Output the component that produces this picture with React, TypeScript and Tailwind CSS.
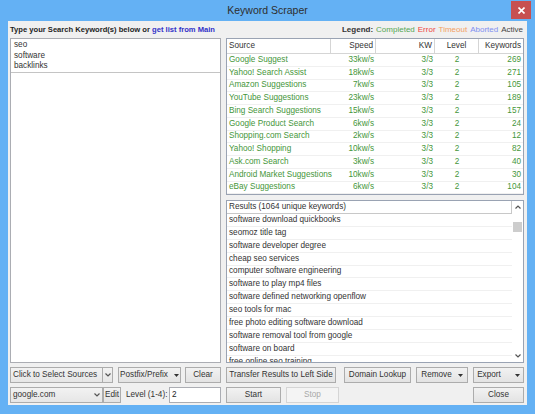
import React from "react";

const sources: [string, string, string][] = [
  ["Google Suggest", "33kw/s", "269"],
  ["Yahoo! Search Assist", "18kw/s", "271"],
  ["Amazon Suggestions", "7kw/s", "105"],
  ["YouTube Suggestions", "23kw/s", "189"],
  ["Bing Search Suggestions", "15kw/s", "157"],
  ["Google Product Search", "6kw/s", "24"],
  ["Shopping.com Search", "2kw/s", "12"],
  ["Yahoo! Shopping", "10kw/s", "82"],
  ["Ask.com Search", "3kw/s", "40"],
  ["Android Market Suggestions", "10kw/s", "30"],
  ["eBay Suggestions", "6kw/s", "104"],
];

const results = [
  "software download quickbooks",
  "seomoz title tag",
  "software developer degree",
  "cheap seo services",
  "computer software engineering",
  "software to play mp4 files",
  "software defined networking openflow",
  "seo tools for mac",
  "free photo editing software download",
  "software removal tool from google",
  "software on board",
  "free online seo training",
];

function Caret() {
  return (
    <svg width="5" height="3" viewBox="0 0 5 3" className="ml-[6px]">
      <path d="M0 0h5L2.5 3z" fill="#333" />
    </svg>
  );
}

function Chevron({ up }: { up?: boolean }) {
  return (
    <svg width="6" height="4" viewBox="0 0 6 4">
      <path d={up ? "M0.5 3.5L3 1l2.5 2.5" : "M0.5 0.5L3 3l2.5-2.5"} fill="none" stroke="#555" strokeWidth="1.2" />
    </svg>
  );
}

const btn =
  "h-[16px] flex items-center justify-center border border-[#acacac] bg-linear-to-b from-[#f2f2f2] to-[#e3e3e3] text-[#333]";

export default function App() {
  return (
    <div className="w-[535px] h-[414px] bg-[#64b1f4] flex flex-col px-[8px] pb-[9px] font-['Liberation_Sans',Arial,sans-serif] text-[8.2px] leading-none overflow-hidden">
      <div className="h-[21px] shrink-0 relative flex items-center justify-center">
        <span className="text-[10.5px] text-[#2e2e2e]">Keyword Scraper</span>
        <div className="absolute right-[-4px] top-[1px] w-[20px] h-[18px] bg-[#c75050] flex items-center justify-center">
          <svg width="7" height="7" viewBox="0 0 7 7">
            <path d="M0.5 0.5l6 6M6.5 0.5l-6 6" stroke="#fff" strokeWidth="1.6" />
          </svg>
        </div>
      </div>

      <div className="flex-1 bg-[#f0f0f0] pl-[2px] pr-[3px] pb-[2px] flex flex-col">
        <div className="h-[17px] flex items-center justify-between pt-[1px]">
          <div className="font-bold text-[#1e1e1e] text-[7.6px]">
            Type your Search Keyword(s) below or <span className="text-[#3232c8]">get list from Main</span>
          </div>
          <div className="text-[8px] flex gap-[3px] pr-[1px]">
            <span className="font-bold text-[#333]">Legend:</span>
            <span className="text-[#55a655]">Completed</span>
            <span className="text-[#ee4545]">Error</span>
            <span className="text-[#f3a062]">Timeout</span>
            <span className="text-[#7f8ff0]">Aborted</span>
            <span className="text-[#444]">Active</span>
          </div>
        </div>

        <div className="grid grid-cols-[211px_298px] grid-rows-[325px_16px_16px] gap-x-[5px] gap-y-[4px]">
          {/* keywords input */}
          <div className="bg-white border border-[#abadb3]">
            <div className="border-b border-[#c4c4c4] pt-[1px] pl-[3px] text-[#333] leading-[10.7px]">
              <div>seo</div>
              <div>software</div>
              <div>backlinks</div>
            </div>
          </div>

          <div className="flex flex-col gap-[5px]">
            {/* sources table */}
            <div className="h-[157px] bg-white border border-[#9aa3b3] overflow-hidden">
              <div className="grid grid-cols-[104px_45px_59px_44px_1fr] h-[15px] border-b border-[#d5d5d5] text-[#333]">
                <div className="pl-[2px] flex items-center border-r border-[#d5d5d5]">Source</div>
                <div className="pr-[2px] flex items-center justify-end border-r border-[#d5d5d5]">Speed</div>
                <div className="pr-[2px] flex items-center justify-end border-r border-[#d5d5d5]">KW</div>
                <div className="flex items-center justify-center border-r border-[#d5d5d5]">Level</div>
                <div className="pr-[2px] flex items-center justify-end">Keywords</div>
              </div>
              {sources.map(([name, speed, kw]) => (
                <div
                  key={name}
                  className="grid grid-cols-[104px_45px_59px_44px_1fr] h-[12.75px] border-b border-[#f0f0f0] text-[#45963a]"
                >
                  <div className="pl-[2px] flex items-center whitespace-nowrap">{name}</div>
                  <div className="pr-[2px] flex items-center justify-end">{speed}</div>
                  <div className="pr-[2px] flex items-center justify-end">3/3</div>
                  <div className="flex items-center justify-center">2</div>
                  <div className="pr-[2px] flex items-center justify-end">{kw}</div>
                </div>
              ))}
            </div>

            {/* results */}
            <div className="h-[163px] bg-white border border-[#9aa3b3] flex overflow-hidden">
              <div className="flex-1 flex flex-col overflow-hidden">
                <div className="h-[13px] shrink-0 border-b border-r border-[#c8c8c8] pl-[2px] flex items-center text-[#333]">
                  Results (1064 unique keywords)
                </div>
                {results.map((r) => (
                  <div
                    key={r}
                    className="h-[12.9px] shrink-0 border-b border-[#f0f0f0] pl-[2px] flex items-center text-[#333] whitespace-nowrap"
                  >
                    {r}
                  </div>
                ))}
              </div>
              <div className="w-[11px] flex flex-col items-center">
                <div className="h-[12px] flex items-center">
                  <Chevron up />
                </div>
                <div className="mt-[9px] w-[9px] h-[10px] bg-[#cdcdcd]" />
                <div className="flex-1" />
                <div className="h-[12px] flex items-center">
                  <Chevron />
                </div>
              </div>
            </div>
          </div>

          {/* bottom row 1 left */}
          <div className="flex items-center">
            <div className="w-[103px] h-[16px] flex border border-[#acacac] bg-linear-to-b from-[#f2f2f2] to-[#e6e6e6] text-[#333]">
              <div className="flex-1 pl-[2px] flex items-center whitespace-nowrap">Click to Select Sources</div>
              <div className="w-[10px] border-l border-[#acacac] flex items-center justify-center">
                <Chevron />
              </div>
            </div>
            <div className={`${btn} w-[63px] ml-[5px]`}>
              Postfix/Prefix
              <Caret />
            </div>
            <div className={`${btn} w-[36px] ml-[4px]`}>Clear</div>
          </div>

          {/* bottom row 1 right */}
          <div className="flex items-center">
            <div className={`${btn} w-[110px] whitespace-nowrap`}>Transfer Results to Left Side</div>
            <div className={`${btn} w-[67px] ml-[8px]`}>Domain Lookup</div>
            <div className={`${btn} w-[52px] ml-[5px]`}>
              Remove
              <Caret />
            </div>
            <div className={`${btn} w-[51px] ml-[5px]`}>
              Export
              <span className="ml-[8px]"><Caret /></span>
            </div>
          </div>

          {/* bottom row 2 left */}
          <div className="flex items-center">
            <div className="w-[93px] h-[16px] flex items-center justify-between border border-[#acacac] bg-linear-to-b from-[#f2f2f2] to-[#e6e6e6] text-[#333] pl-[2px] pr-[2px]">
              <span>google.com</span>
              <Chevron />
            </div>
            <div className={`${btn} w-[18px]`}>Edit</div>
            <span className="ml-[5px] text-[#333]">Level (1-4):</span>
            <div className="ml-auto w-[52px] h-[16px] bg-white border border-[#abadb3] flex items-center pl-[2px] text-[#222]">
              2
            </div>
          </div>

          {/* bottom row 2 right */}
          <div className="flex items-center">
            <div className={`${btn} w-[55px]`}>Start</div>
            <div className="h-[16px] w-[53px] ml-[5px] flex items-center justify-center border border-[#d5d5d5] bg-[#f4f4f4] text-[#a8a8a8]">
              Stop
            </div>
            <div className={`${btn} w-[51px] ml-auto`}>Close</div>
          </div>
        </div>
      </div>
    </div>
  );
}
